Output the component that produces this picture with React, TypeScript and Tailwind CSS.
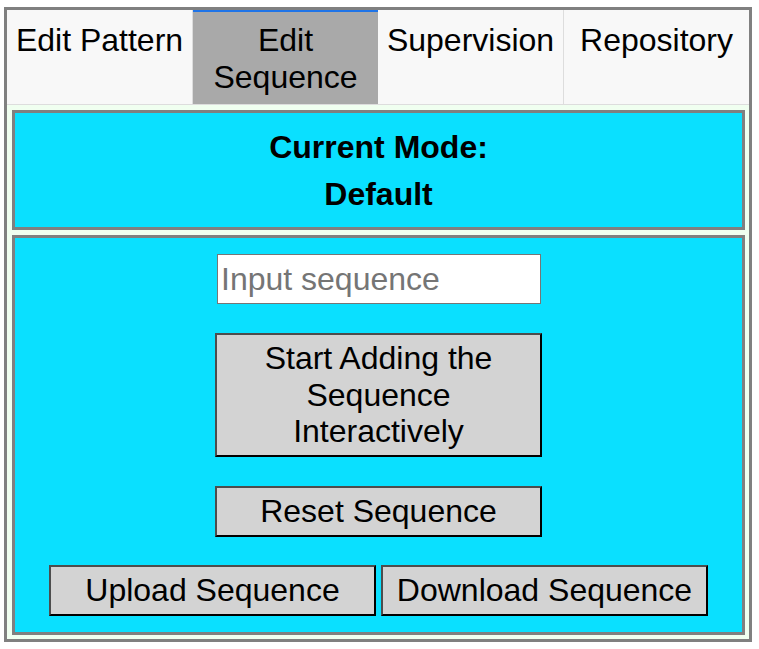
import { useState } from "react";

const tabs = ["Edit Pattern", "Edit Sequence", "Supervision", "Repository"];

const btn =
  "bg-[#d3d3d3] border-2 border-t-[#4d4d4d] border-l-[#4d4d4d] border-b-black border-r-black text-black text-[32px] leading-[36.8px] text-center";

export default function App() {
  const [active, setActive] = useState(1);
  const [sequence, setSequence] = useState("");

  return (
    <div className="min-h-screen bg-white font-['Liberation_Sans',Arial,sans-serif] pt-[7px] pl-[4px]">
      <div className="w-[748px] h-[635px] border-[3px] border-[#808080] bg-[#f0fff0] flex flex-col">
        <div className="flex h-[95px] border-b border-[#dddddd]">
          {tabs.map((t, i) => (
            <button
              key={t}
              onClick={() => setActive(i)}
              className={
                i === active
                  ? "flex-1 bg-[#a9a9a9] border-t-2 border-[#1f74e8] pt-[10px] px-2 text-[32px] leading-[36.8px] text-black text-center flex justify-center items-start"
                  : "flex-1 bg-[#f8f8f8] border-r border-[#dddddd] pt-[12px] px-2 text-[32px] leading-[36.8px] text-black text-center flex justify-center items-start last:border-r-0"
              }
            >
              {t}
            </button>
          ))}
        </div>

        <div className="flex flex-col pt-[5px] pl-[5px] pr-[4px] gap-[5px]">
          <div className="h-[120px] border-[3px] border-[#808080] bg-[#0ae0ff] pt-[11px] text-center font-bold text-black text-[32px] leading-[47px]">
            <div>Current Mode:</div>
            <div>Default</div>
          </div>

          <div className="h-[400px] border-[3px] border-[#808080] bg-[#0ae0ff] pt-[16px] flex flex-col items-center">
            <input
              value={sequence}
              onChange={(e) => setSequence(e.target.value)}
              placeholder="Input sequence"
              className="w-[324px] h-[50px] bg-white border border-[#767676] px-[3px] text-[32px] text-black placeholder:text-[#757575] outline-none ml-[1px]"
            />
            <button className={`${btn} mt-[29px] w-[327px] h-[124px] px-2`}>
              Start Adding the Sequence Interactively
            </button>
            <button className={`${btn} mt-[29px] w-[327px] h-[51px]`}>Reset Sequence</button>
            <div className="mt-[28px] flex gap-[5px]">
              <button className={`${btn} w-[327px] h-[51px]`}>Upload Sequence</button>
              <button className={`${btn} w-[327px] h-[51px]`}>Download Sequence</button>
            </div>
          </div>
        </div>
      </div>
    </div>
  );
}
